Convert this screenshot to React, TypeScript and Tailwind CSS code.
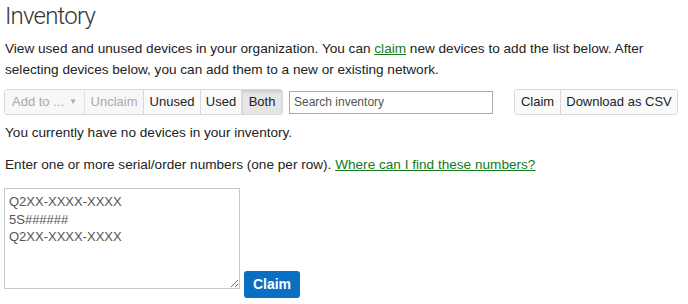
const App = () => {
  return (
    <div className="w-[688px] h-[304px] bg-white text-[13.6px] text-[#222] font-['Liberation_Sans',Arial,sans-serif] pl-[4px] pr-[10px] overflow-hidden">
      <h1 className="text-[24px] leading-[30px] font-light tracking-[-0.8px] font-['Roboto',sans-serif] text-[#333] pt-[1px] pl-[1px]">
        Inventory
      </h1>
      <p className="mt-[7px] leading-[21px] pl-[1px]">
        View used and unused devices in your organization. You can{' '}
        <a className="text-[#117a1a] underline">claim</a> new devices to add the list below. After
        <br />
        selecting devices below, you can add them to a new or existing network.
      </p>
      <div className="mt-[9px] flex items-center h-[26px] text-[13px]">
        <div className="flex h-[26px] border border-[#d9d9d9] rounded-[3px] overflow-hidden">
          <button className="w-[80px] bg-[#f7f7f7] text-[#aaa] flex items-center justify-center gap-[5px] border-r border-[#e2e2e2]">
            Add to ...
            <span className="text-[8px] text-[#aaa]">▼</span>
          </button>
          <button className="w-[59px] bg-[#f7f7f7] text-[#aaa] border-r border-[#d9d9d9]">Unclaim</button>
          <button className="w-[57px] bg-[#fafafa] text-[#222] border-r border-[#d9d9d9]">Unused</button>
          <button className="w-[41px] bg-[#fafafa] text-[#222] border-r border-[#d9d9d9]">Used</button>
          <button className="w-[40px] bg-[#e6e6e6] text-[#222] shadow-[inset_0_2px_3px_rgba(0,0,0,0.12)]">Both</button>
        </div>
        <input
          className="ml-[6px] w-[204px] h-[23px] border border-[#aaa] px-[4px] text-[12px] outline-none placeholder:text-[#555]"
          placeholder="Search inventory"
        />
        <div className="ml-auto flex h-[26px] border border-[#d9d9d9] rounded-[3px] overflow-hidden">
          <button className="w-[46px] bg-[#fafafa] border-r border-[#d9d9d9]">Claim</button>
          <button className="w-[116px] bg-[#fafafa]">Download as CSV</button>
        </div>
      </div>
      <p className="mt-[8px] leading-[20px] pl-[1px]">You currently have no devices in your inventory.</p>
      <p className="mt-[12px] leading-[20px] pl-[1px]">
        Enter one or more serial/order numbers (one per row).{' '}
        <a className="text-[#117a1a] underline">Where can I find these numbers?</a>
      </p>
      <div className="mt-[13px] flex items-start gap-[4px]">
        <textarea
          className="w-[236px] h-[101px] border border-[#c8c8c8] px-[4px] py-[4px] leading-[17.5px] text-[13px] text-[#555] resize-y outline-none font-['Liberation_Sans',Arial,sans-serif]"
          defaultValue={'Q2XX-XXXX-XXXX\n5S######\nQ2XX-XXXX-XXXX'}
        />
        <button className="mt-[83px] h-[27px] w-[56px] bg-[#0a6fc2] text-white font-bold text-[14px] rounded-[3px]">Claim</button>
      </div>
    </div>
  );
};

export default App;
